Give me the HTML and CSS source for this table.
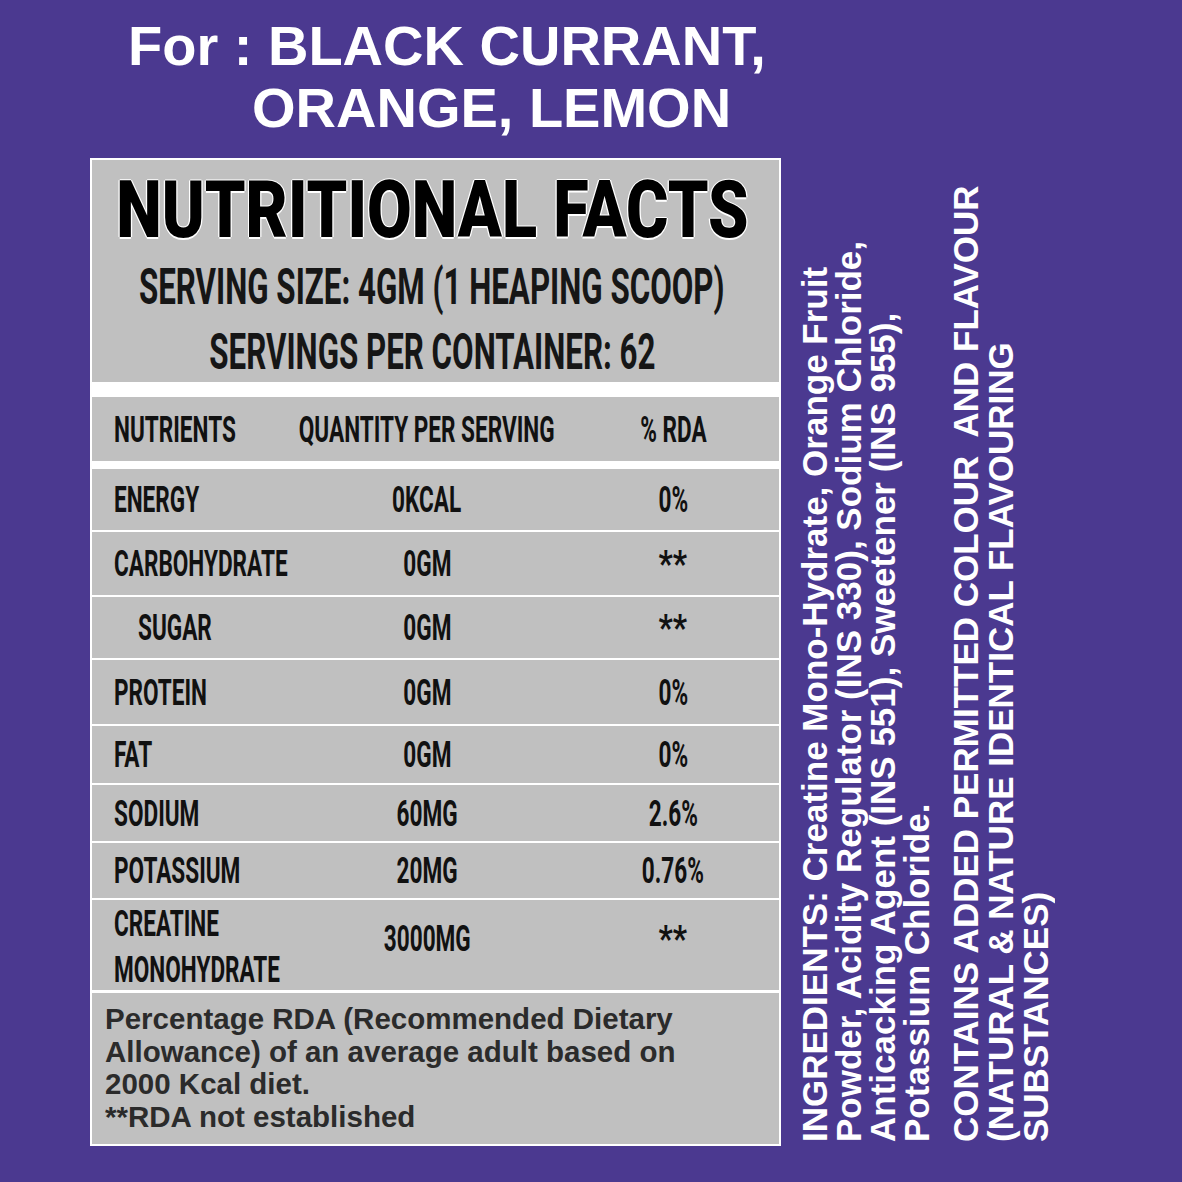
FILE: index.html
```html
<!DOCTYPE html>
<html lang="en">
<head>
<meta charset="utf-8">
<title>Nutritional Facts</title>
<link rel="stylesheet" href="styles.css">
</head>
<body>
<div class="page">
  <h1 class="title"><span class="t1">For : BLACK CURRANT,</span><span class="t2">ORANGE, LEMON</span></h1>
  <div class="main">
    <div class="panel">
      <div class="top">
        <div class="heading"><span>NUTRITIONAL FACTS</span></div>
        <div class="sub sub1"><span>SERVING SIZE: 4GM (1 HEAPING SCOOP)</span></div>
        <div class="sub sub2"><span>SERVINGS PER CONTAINER: 62</span></div>
      </div>
      <div class="row head">
        <div class="c1"><span>NUTRIENTS</span></div>
        <div class="c2"><span>QUANTITY PER SERVING</span></div>
        <div class="c3"><span>% RDA</span></div>
      </div>
      <div class="row energy">
        <div class="c1"><span>ENERGY</span></div>
        <div class="c2"><span>0KCAL</span></div>
        <div class="c3"><span>0%</span></div>
      </div>
      <div class="row carbo">
        <div class="c1"><span>CARBOHYDRATE</span></div>
        <div class="c2"><span>0GM</span></div>
        <div class="c3"><span class="star">**</span></div>
      </div>
      <div class="row sugar">
        <div class="c1 indent"><span>SUGAR</span></div>
        <div class="c2"><span>0GM</span></div>
        <div class="c3"><span class="star">**</span></div>
      </div>
      <div class="row protein">
        <div class="c1"><span>PROTEIN</span></div>
        <div class="c2"><span>0GM</span></div>
        <div class="c3"><span>0%</span></div>
      </div>
      <div class="row fat">
        <div class="c1"><span>FAT</span></div>
        <div class="c2"><span>0GM</span></div>
        <div class="c3"><span>0%</span></div>
      </div>
      <div class="row sodium">
        <div class="c1"><span>SODIUM</span></div>
        <div class="c2"><span>60MG</span></div>
        <div class="c3"><span>2.6%</span></div>
      </div>
      <div class="row potassium">
        <div class="c1"><span>POTASSIUM</span></div>
        <div class="c2"><span>20MG</span></div>
        <div class="c3"><span>0.76%</span></div>
      </div>
      <div class="row creatine">
        <div class="c1 two"><span>CREATINE<br>MONOHYDRATE</span></div>
        <div class="c2 raised"><span>3000MG</span></div>
        <div class="c3 raised"><span class="star">**</span></div>
      </div>
      <div class="note">
        Percentage RDA (Recommended Dietary<br>
        Allowance) of an average adult based on<br>
        2000 Kcal diet.<br>
        **RDA not established
      </div>
    </div>
    <div class="side">
      <p class="ingr">INGREDIENTS: Creatine Mono-Hydrate, Orange Fruit<br>Powder, Acidity Regulator (INS 330), Sodium Chloride,<br>Anticacking Agent (INS 551), Sweetener (INS 955),<br>Potassium Chloride.</p>
      <p class="contains">CONTAINS ADDED PERMITTED COLOUR&nbsp; AND FLAVOUR<br>(NATURAL &amp; NATURE IDENTICAL FLAVOURING<br>SUBSTANCES)</p>
    </div>
  </div>
</div>
</body>
</html>
```

FILE: styles.css
```css
html, body {
  margin: 0;
  padding: 0;
}

body {
  width: 1182px;
  height: 1182px;
  overflow: hidden;
  background: #4b3990;
}

.page {
  width: 1182px;
  height: 1182px;
}

.title {
  margin: 0;
  padding: 15px 0 19px;
  font-family: "Liberation Sans", Arial, sans-serif;
  font-weight: 700;
  font-size: 56px;
  line-height: 62px;
  color: #ffffff;
  white-space: nowrap;
}

.t1 {
  display: block;
  padding-left: 128px;
}

.t2 {
  display: block;
  padding-left: 252px;
}

.main {
  display: flex;
  align-items: stretch;
}

.panel {
  width: 687px;
  margin-left: 90px;
  padding: 2px;
  background: #ffffff;
  display: flex;
  flex-direction: column;
}

/* ---------- top heading block ---------- */
.top {
  height: 222px;
  box-sizing: border-box;
  padding: 10px 7px 0 0;
  background: #c0c0c0;
  display: flex;
  flex-direction: column;
  align-items: center;
  font-family: "Roboto", sans-serif;
  white-space: nowrap;
}

.heading {
  height: 80px;
  display: flex;
  justify-content: center;
  font-size: 80px;
  line-height: 80px;
  font-weight: 900;
  color: #000000;
}

.heading span {
  display: inline-block;
  transform: scaleX(0.81);
  text-shadow: 1.5px 0 #fff, -1.5px 0 #fff, 0 1.5px #fff, 0 -1.5px #fff;
}

.sub {
  height: 50px;
  display: flex;
  justify-content: center;
  font-size: 50px;
  line-height: 50px;
  font-weight: 700;
  color: #161616;
}

.sub span {
  display: inline-block;
  transform: scaleX(0.626);
}

.sub1 {
  margin-top: 12px;
}

.sub2 {
  margin-top: 15px;
}

/* ---------- table rows ---------- */
.row {
  display: grid;
  grid-template-columns: 183px 260px 1fr;
  align-items: center;
  padding-left: 22px;
  margin-top: 2px;
  background: #c0c0c0;
  font-family: "Roboto", sans-serif;
  font-weight: 700;
  font-size: 37px;
  line-height: 37px;
  color: #111111;
  white-space: nowrap;
}

.row span {
  display: inline-block;
  transform: scaleX(0.61);
}

.row .star {
  transform: scaleX(0.85);
}

.c1 span {
  transform-origin: left center;
}

.c2,
.c3 {
  display: flex;
  justify-content: center;
}

.c3 {
  padding-left: 10px;
}

.indent {
  padding-left: 24px;
}

.head {
  margin-top: 15px;
  height: 64px;
}

.energy {
  margin-top: 8px;
  height: 61px;
}

.carbo {
  height: 63px;
}

.sugar {
  height: 61px;
}

.protein {
  height: 64px;
}

.fat {
  height: 57px;
}

.sodium {
  height: 56px;
}

.potassium {
  height: 55px;
}

.creatine {
  height: 90px;
}

.two {
  align-self: start;
  padding-top: 1px;
  line-height: 46px;
}

.raised {
  align-self: start;
  padding-top: 20px;
}

/* ---------- footnote ---------- */
.note {
  margin-top: 3px;
  height: 151px;
  box-sizing: border-box;
  padding: 10px 0 0 13px;
  background: #c0c0c0;
  font-family: "Liberation Sans", Arial, sans-serif;
  font-weight: 700;
  font-size: 29.5px;
  line-height: 32.7px;
  color: #2b2b2b;
  white-space: nowrap;
}

/* ---------- rotated side text ---------- */
.side {
  margin-left: 17px;
  padding-top: 4px;
  writing-mode: vertical-rl;
  transform: rotate(180deg);
  font-family: "Liberation Sans", Arial, sans-serif;
  font-weight: 700;
  font-size: 35px;
  color: #ffffff;
  white-space: nowrap;
}

.side p {
  margin: 0;
}

.side .ingr {
  line-height: 34px;
}

.side .contains {
  margin-block-start: 14px;
  line-height: 35px;
}
```
